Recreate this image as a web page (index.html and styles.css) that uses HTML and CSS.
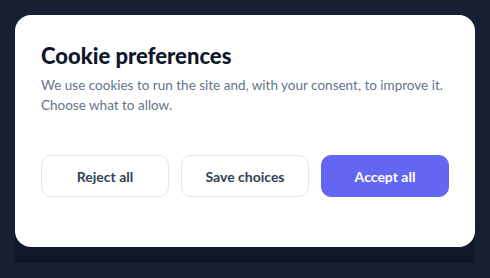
FILE: index.html
```html
<!DOCTYPE html>
<html lang="en">
<head>
  <meta charset="UTF-8">
  <meta name="viewport" content="width=device-width, initial-scale=1.0">
  <title>Cookie preferences</title>
  <link rel="stylesheet" href="styles.css">
</head>
<body>
  <div class="dialog-wrap">
    <!-- Cookie consent dialog -->
    <div class="dialog">
      <h1 class="dialog-title">Cookie preferences</h1>
      <p class="dialog-text">We use cookies to run the site and, with your consent, to improve it. Choose what to allow.</p>
      <div class="dialog-actions">
        <button class="btn btn-outline">Reject all</button>
        <button class="btn btn-outline">Save choices</button>
        <button class="btn btn-primary">Accept all</button>
      </div>
    </div>
  </div>
</body>
</html>
```

FILE: styles.css
```css
html, body { margin: 0; height: 100%; }
body { background: #172033; font-family: Lato, "Noto Sans", sans-serif; padding: 15px; box-sizing: border-box; }
.dialog-wrap {
  width: 460px;
  padding-bottom: 16px;
  background: linear-gradient(transparent 50%, #111827 50%);
}
.dialog { background: #fff; border-radius: 16px; padding: 28px 26px 50px; }
.dialog-title { margin: 0; font-size: 22px; line-height: 26px; font-weight: 900; color: #0f172a; }
.dialog-text { margin: 6px 0 0; font-size: 13.5px; line-height: 20px; color: #64748b; }
.dialog-actions { display: grid; grid-template-columns: repeat(3, 1fr); gap: 12px; margin-top: 40px; }
.btn {
  height: 42px; border-radius: 10px; font-family: inherit; font-size: 14px; font-weight: 700; cursor: pointer;
}
.btn-outline { background: #fff; border: 1px solid #e2e8f0; color: #334155; }
.btn-primary { background: #6366f1; border: 1px solid #6366f1; color: #fff; }
```
